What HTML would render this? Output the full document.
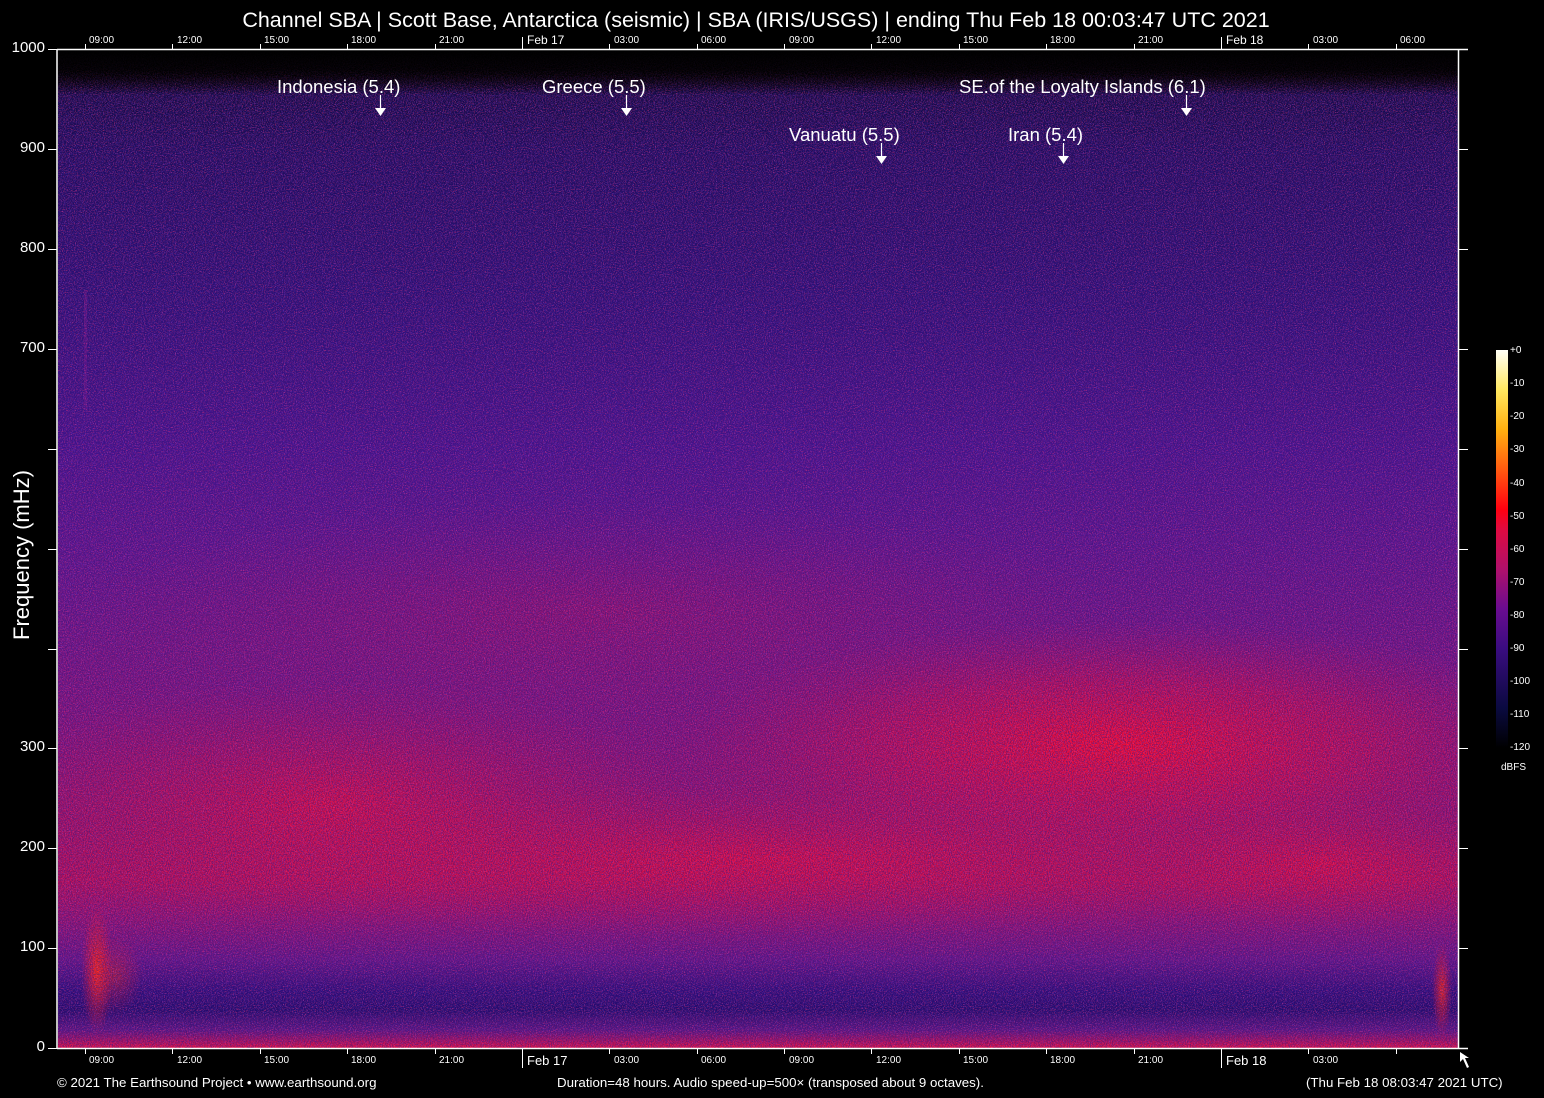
<!DOCTYPE html>
<html><head><meta charset="utf-8">
<style>
html,body{margin:0;padding:0;background:#000;}
body{width:1544px;height:1098px;position:relative;overflow:hidden;font-family:"Liberation Sans",sans-serif;color:#fff;}
.t{position:absolute;white-space:nowrap;}
</style></head><body>
<svg width="1544" height="1098" style="position:absolute;left:0;top:0" xmlns="http://www.w3.org/2000/svg">
<defs>
<linearGradient id="vg" x1="0" y1="0" x2="0" y2="1">
<stop offset="0" stop-color="#000"/>
<stop offset="0.025" stop-color="#000"/>
<stop offset="0.045" stop-color="#120a42"/>
<stop offset="0.1" stop-color="#1c0c5a"/>
<stop offset="0.25" stop-color="#2a0f74"/>
<stop offset="0.4" stop-color="#46128c"/>
<stop offset="0.5" stop-color="#5c148c"/>
<stop offset="0.6" stop-color="#721482"/>
<stop offset="0.7" stop-color="#861276"/>
<stop offset="0.78" stop-color="#9c1066"/>
<stop offset="0.832" stop-color="#b80e56"/>
<stop offset="0.872" stop-color="#921270"/>
<stop offset="0.912" stop-color="#621486"/>
<stop offset="0.942" stop-color="#2e0c78"/>
<stop offset="0.962" stop-color="#220a6a"/>
<stop offset="0.982" stop-color="#5a1480"/>
<stop offset="0.994" stop-color="#b01058"/>
<stop offset="1" stop-color="#e81040"/>
</linearGradient>
<linearGradient id="topfade" x1="0" y1="0" x2="0" y2="1">
<stop offset="0" stop-color="#000" stop-opacity="1"/>
<stop offset="0.45" stop-color="#000" stop-opacity="0.85"/>
<stop offset="1" stop-color="#000" stop-opacity="0"/>
</linearGradient>
<radialGradient id="blob" cx="0.5" cy="0.5" r="0.5">
<stop offset="0" stop-color="#ff0a2a" stop-opacity="0.95"/>
<stop offset="0.55" stop-color="#e80c3c" stop-opacity="0.5"/>
<stop offset="1" stop-color="#c01050" stop-opacity="0"/>
</radialGradient>
<radialGradient id="blob2" cx="0.5" cy="0.5" r="0.5">
<stop offset="0" stop-color="#f00c38" stop-opacity="0.75"/>
<stop offset="1" stop-color="#c01050" stop-opacity="0"/>
</radialGradient>
<radialGradient id="hot" cx="0.5" cy="0.5" r="0.5">
<stop offset="0" stop-color="#ff2a10" stop-opacity="1"/>
<stop offset="1" stop-color="#ff1020" stop-opacity="0"/>
</radialGradient>
<filter id="nz" x="0" y="0" width="100%" height="100%">
<feTurbulence type="fractalNoise" baseFrequency="0.95 0.7" numOctaves="2" seed="3"/>
<feColorMatrix type="matrix" values="0 0 0 0 0.03  0 0 0 0 0.01  0 0 0 0 0.2  -5 0 0 0 2.8"/>
</filter>
<filter id="nz2" x="0" y="0" width="100%" height="100%">
<feTurbulence type="fractalNoise" baseFrequency="0.9 0.95" numOctaves="1" seed="9"/>
<feColorMatrix type="matrix" values="0 0 0 0 0.95  0 0 0 0 0.04  0 0 0 0 0.2  0 5 0 0 -2.5"/>
</filter>
<filter id="nz3" x="0" y="0" width="100%" height="100%">
<feTurbulence type="fractalNoise" baseFrequency="0.85 0.9" numOctaves="1" seed="21"/>
<feColorMatrix type="matrix" values="0 0 0 0 0.25  0 0 0 0 0.05  0 0 0 0 0.7  0 0 5 0 -2.6"/>
</filter>
<clipPath id="pc"><rect x="58" y="50" width="1400" height="998"/></clipPath>
<linearGradient id="cb" x1="0" y1="1" x2="0" y2="0">
<stop offset="0" stop-color="#000"/>
<stop offset="0.1" stop-color="#0a0a40"/>
<stop offset="0.25" stop-color="#3a0c80"/>
<stop offset="0.35" stop-color="#6a0c90"/>
<stop offset="0.45" stop-color="#b0106a"/>
<stop offset="0.55" stop-color="#e00a40"/>
<stop offset="0.6" stop-color="#ff0010"/>
<stop offset="0.7" stop-color="#ff5a10"/>
<stop offset="0.8" stop-color="#ffb010"/>
<stop offset="0.9" stop-color="#ffe860"/>
<stop offset="1" stop-color="#fffff8"/>
</linearGradient>
</defs>
<g clip-path="url(#pc)">
<rect x="58" y="50" width="1400" height="998" fill="url(#vg)"/>
<ellipse cx="1120" cy="745" rx="450" ry="125" fill="url(#blob)"/>
<ellipse cx="750" cy="860" rx="680" ry="75" fill="url(#blob2)"/>
<ellipse cx="330" cy="805" rx="360" ry="125" fill="url(#blob2)"/>
<ellipse cx="1320" cy="865" rx="220" ry="65" fill="url(#blob2)"/>
<ellipse cx="600" cy="610" rx="520" ry="110" fill="url(#blob2)" opacity="0.35"/>
<ellipse cx="97" cy="970" rx="16" ry="65" fill="url(#hot)"/>
<ellipse cx="115" cy="975" rx="28" ry="40" fill="url(#hot)" opacity="0.5"/>
<ellipse cx="1442" cy="990" rx="10" ry="48" fill="url(#hot)" opacity="0.9"/>
<rect x="84" y="290" width="3" height="120" fill="#8a1a90" opacity="0.4"/>
<rect x="58" y="50" width="1400" height="998" filter="url(#nz3)" opacity="0.5"/>
<rect x="58" y="50" width="1400" height="998" filter="url(#nz2)" opacity="0.45"/>
<rect x="58" y="50" width="1400" height="998" filter="url(#nz)" opacity="0.5"/>
<rect x="58" y="50" width="1400" height="45" fill="url(#topfade)"/>
</g>
<g stroke="#fff" stroke-width="1.5" fill="none">
<line x1="57" y1="49" x2="57" y2="1049"/>
<line x1="1458.5" y1="49" x2="1458.5" y2="1049"/>
<line x1="57" y1="49.5" x2="1468" y2="49.5"/>
<line x1="57" y1="1048.5" x2="1468" y2="1048.5"/>
</g>
<g stroke="#fff" stroke-width="1">
<path d="M48 49.5H57M48 149.5H57M48 249.5H57M48 349.5H57M48 449.5H57M48 549.5H57M48 649.5H57M48 748.5H57M48 848.5H57M48 948.5H57M48 1048.5H57"/>
<path d="M1458 149.5H1468M1458 249.5H1468M1458 349.5H1468M1458 449.5H1468M1458 549.5H1468M1458 649.5H1468M1458 748.5H1468M1458 848.5H1468M1458 948.5H1468"/>
<path d="M85.5 44V50M172.5 44V50M260.5 44V50M347.5 44V50M435.5 44V50M522.5 37V50M609.5 44V50M697.5 44V50M784.5 44V50M871.5 44V50M959.5 44V50M1046.5 44V50M1134.5 44V50M1221.5 37V50M1308.5 44V50M1396.5 44V50"/>
<path d="M85.5 1048V1054M172.5 1048V1054M260.5 1048V1054M347.5 1048V1054M435.5 1048V1054M522.5 1048V1068M609.5 1048V1054M697.5 1048V1054M784.5 1048V1054M871.5 1048V1054M959.5 1048V1054M1046.5 1048V1054M1134.5 1048V1054M1221.5 1048V1068M1308.5 1048V1054M1396.5 1048V1054"/>
</g>
<g stroke="#fff" stroke-width="1.2" fill="#fff">
<path d="M380.5 95V108" /><path d="M375 108H386L380.5 116Z" stroke="none"/>
<path d="M626.5 95V108" /><path d="M621 108H632L626.5 116Z" stroke="none"/>
<path d="M1186.5 95V108" /><path d="M1181 108H1192L1186.5 116Z" stroke="none"/>
<path d="M881.5 143V156" /><path d="M876 156H887L881.5 164Z" stroke="none"/>
<path d="M1063.5 143V156" /><path d="M1058 156H1069L1063.5 164Z" stroke="none"/>
</g>
<rect x="1496" y="350" width="12" height="398" fill="url(#cb)"/>
<path d="M1460 1052L1460 1062L1463 1059L1467 1068L1469 1067L1465 1058L1469 1058Z" fill="#fff"/>
</svg>

<div class="t" style="left:0;width:1512px;text-align:center;top:8px;font-size:21.5px;">Channel SBA | Scott Base, Antarctica (seismic) | SBA (IRIS/USGS) | ending Thu Feb 18 00:03:47 UTC 2021</div>

<div class="t" style="left:0;width:45px;text-align:right;top:39px;font-size:15px;">1000</div>
<div class="t" style="left:0;width:45px;text-align:right;top:139px;font-size:15px;">900</div>
<div class="t" style="left:0;width:45px;text-align:right;top:239px;font-size:15px;">800</div>
<div class="t" style="left:0;width:45px;text-align:right;top:339px;font-size:15px;">700</div>
<div class="t" style="left:0;width:45px;text-align:right;top:738px;font-size:15px;">300</div>
<div class="t" style="left:0;width:45px;text-align:right;top:838px;font-size:15px;">200</div>
<div class="t" style="left:0;width:45px;text-align:right;top:938px;font-size:15px;">100</div>
<div class="t" style="left:0;width:45px;text-align:right;top:1038px;font-size:15px;">0</div>
<div class="t" style="left:22px;top:555px;font-size:22px;transform:translate(-50%,-50%) rotate(-90deg);transform-origin:center;">Frequency (mHz)</div>

<div style="position:absolute;left:0;top:35px;font-size:10px;">
<span class="t" style="left:89px">09:00</span><span class="t" style="left:177px">12:00</span><span class="t" style="left:264px">15:00</span><span class="t" style="left:351px">18:00</span><span class="t" style="left:439px">21:00</span><span class="t" style="left:527px;top:-2px;font-size:12px">Feb 17</span><span class="t" style="left:614px">03:00</span><span class="t" style="left:701px">06:00</span><span class="t" style="left:789px">09:00</span><span class="t" style="left:876px">12:00</span><span class="t" style="left:963px">15:00</span><span class="t" style="left:1050px">18:00</span><span class="t" style="left:1138px">21:00</span><span class="t" style="left:1226px;top:-2px;font-size:12px">Feb 18</span><span class="t" style="left:1313px">03:00</span><span class="t" style="left:1400px">06:00</span>
</div>
<div style="position:absolute;left:0;top:1055px;font-size:10px;">
<span class="t" style="left:89px">09:00</span><span class="t" style="left:177px">12:00</span><span class="t" style="left:264px">15:00</span><span class="t" style="left:351px">18:00</span><span class="t" style="left:439px">21:00</span><span class="t" style="left:527px;top:-2px;font-size:13px">Feb 17</span><span class="t" style="left:614px">03:00</span><span class="t" style="left:701px">06:00</span><span class="t" style="left:789px">09:00</span><span class="t" style="left:876px">12:00</span><span class="t" style="left:963px">15:00</span><span class="t" style="left:1050px">18:00</span><span class="t" style="left:1138px">21:00</span><span class="t" style="left:1226px;top:-2px;font-size:13px">Feb 18</span><span class="t" style="left:1313px">03:00</span>
</div>

<div class="t" style="left:277px;top:76px;font-size:18.5px;">Indonesia (5.4)</div>
<div class="t" style="left:542px;top:76px;font-size:18.5px;">Greece (5.5)</div>
<div class="t" style="left:959px;top:76px;font-size:18.5px;">SE.of the Loyalty Islands (6.1)</div>
<div class="t" style="left:789px;top:124px;font-size:18.5px;">Vanuatu (5.5)</div>
<div class="t" style="left:1008px;top:124px;font-size:18.5px;">Iran (5.4)</div>

<div style="position:absolute;left:1510px;top:0;font-size:10px;">
<span class="t" style="top:345px">+0</span><span class="t" style="top:378px">-10</span><span class="t" style="top:411px">-20</span><span class="t" style="top:444px">-30</span><span class="t" style="top:478px">-40</span><span class="t" style="top:511px">-50</span><span class="t" style="top:544px">-60</span><span class="t" style="top:577px">-70</span><span class="t" style="top:610px">-80</span><span class="t" style="top:643px">-90</span><span class="t" style="top:676px">-100</span><span class="t" style="top:709px">-110</span><span class="t" style="top:742px">-120</span>
</div>
<div class="t" style="left:1501px;top:762px;font-size:10px;">dBFS</div>

<div class="t" style="left:57px;top:1075px;font-size:13.3px;">© 2021 The Earthsound Project • www.earthsound.org</div>
<div class="t" style="left:557px;top:1075px;font-size:13.3px;">Duration=48 hours. Audio speed-up=500× (transposed about 9 octaves).</div>
<div class="t" style="left:1306px;top:1075px;font-size:13.3px;">(Thu Feb 18 08:03:47 2021 UTC)</div>
</body></html>
